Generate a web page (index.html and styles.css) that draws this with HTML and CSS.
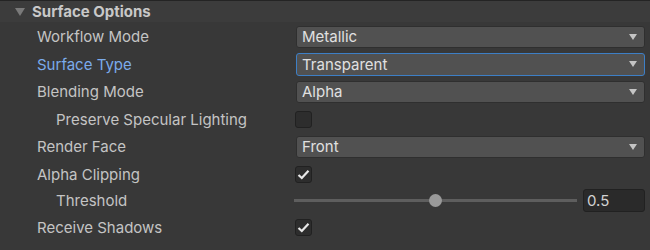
FILE: index.html
```html
<!DOCTYPE html>
<html>
<head>
<meta charset="utf-8">
<link rel="stylesheet" href="styles.css">
</head>
<body>
<div class="panel">
  <div class="header">
    <svg class="fold" width="10" height="8" viewBox="0 0 10 8"><polygon points="0,0 10,0 5,8" fill="#7a7a7a"/></svg>
    <span class="title">Surface Options</span>
  </div>
  <div class="rows">
    <div class="row">
      <div class="label">Workflow Mode</div>
      <div class="field"><div class="dropdown"><span>Metallic</span><span class="arrow"></span></div></div>
    </div>
    <div class="row">
      <div class="label active">Surface Type</div>
      <div class="field"><div class="dropdown focus"><span>Transparent</span><span class="arrow"></span></div></div>
    </div>
    <div class="row">
      <div class="label">Blending Mode</div>
      <div class="field"><div class="dropdown"><span>Alpha</span><span class="arrow"></span></div></div>
    </div>
    <div class="row">
      <div class="label sub">Preserve Specular Lighting</div>
      <div class="field"><div class="checkbox"></div></div>
    </div>
    <div class="row">
      <div class="label">Render Face</div>
      <div class="field"><div class="dropdown"><span>Front</span><span class="arrow"></span></div></div>
    </div>
    <div class="row">
      <div class="label">Alpha Clipping</div>
      <div class="field"><div class="checkbox"><svg width="13" height="11" viewBox="0 0 13 11"><polyline points="1.5,6 4.8,9 11.5,1.8" fill="none" stroke="#e8e8e8" stroke-width="2.2"/></svg></div></div>
    </div>
    <div class="row slim">
      <div class="label sub">Threshold</div>
      <div class="field slider-field">
        <div class="slider"><div class="track"></div><div class="thumb"></div></div>
        <div class="number">0.5</div>
      </div>
    </div>
    <div class="row last">
      <div class="label">Receive Shadows</div>
      <div class="field"><div class="checkbox"><svg width="13" height="11" viewBox="0 0 13 11"><polyline points="1.5,6 4.8,9 11.5,1.8" fill="none" stroke="#e8e8e8" stroke-width="2.2"/></svg></div></div>
    </div>
  </div>
</div>
</body>
</html>
```

FILE: styles.css
```css
html, body {
  margin: 0;
  padding: 0;
  background: #383838;
}
body {
  width: 650px;
  height: 250px;
  overflow: hidden;
  font-family: Inter, "Noto Sans", sans-serif;
}
.panel {
  width: 650px;
}
.header {
  height: 21px;
  border-top: 1px solid #242424;
  background: #3c3c3c;
  display: flex;
  align-items: center;
}
.fold {
  margin-left: 15px;
  margin-right: 7px;
}
.title {
  font-weight: 700;
  font-size: 15px;
  color: #c8c8c8;
}
.rows {
  padding-top: 1px;
}
.row {
  height: 27.5px;
  display: flex;
  align-items: center;
}
.row.slim {
  height: 24px;
}
.row.last {
  margin-top: 1.5px;
}
.label {
  width: 295px;
  padding-left: 37px;
  box-sizing: border-box;
  font-size: 15px;
  color: #c4c4c4;
  white-space: nowrap;
}
.label.sub {
  padding-left: 56px;
}
.label.active {
  color: #7babeb;
}
.field {
  flex: 1;
  padding-right: 5px;
  display: flex;
  align-items: center;
}
.dropdown {
  flex: 1;
  height: 22px;
  box-sizing: border-box;
  background: #515151;
  border: 1px solid #2f2f2f;
  border-radius: 3px;
  display: flex;
  align-items: center;
  justify-content: space-between;
  padding-left: 5px;
  padding-right: 7px;
  margin-left: 1px;
  font-size: 15px;
  color: #e0e0e0;
}
.dropdown.focus {
  border-color: #3d7fc6;
  height: 23.5px;
}
.arrow {
  width: 0;
  height: 0;
  border-left: 4.5px solid transparent;
  border-right: 4.5px solid transparent;
  border-top: 6px solid #c4c4c4;
}
.checkbox {
  width: 17px;
  height: 17px;
  box-sizing: border-box;
  background: #2d2d2d;
  border: 1px solid #212121;
  border-radius: 3px;
  display: flex;
  align-items: center;
  justify-content: center;
}
.slider-field {
  gap: 6px;
}
.slider {
  position: relative;
  width: 283px;
  height: 14px;
  display: flex;
  align-items: center;
}
.track {
  width: 100%;
  height: 3px;
  background: #5e5e5e;
}
.thumb {
  position: absolute;
  left: 135px;
  top: 0.5px;
  width: 13px;
  height: 13px;
  border-radius: 50%;
  background: #999999;
}
.number {
  width: 62px;
  height: 23px;
  box-sizing: border-box;
  background: #2a2a2a;
  border: 1px solid #212121;
  border-radius: 3px;
  padding-left: 3px;
  display: flex;
  align-items: center;
  font-size: 15px;
  color: #d2d2d2;
}
```
